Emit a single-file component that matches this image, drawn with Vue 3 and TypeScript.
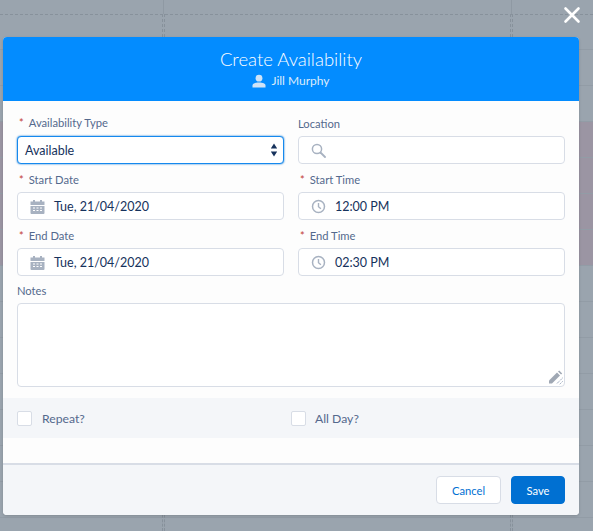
<script setup lang="ts">
const gridRows = [49, 85, 121, 157, 193, 229, 265, 301, 337, 373, 409, 445, 481, 517]
const columns = [163, 511]
</script>

<template>
  <div class="page">
    <div class="backdrop">
      <div class="block"></div>
      <div v-for="y in gridRows" :key="y" class="hline" :style="{ top: y + 'px' }"></div>
      <div class="dash"></div>
      <template v-for="x in columns" :key="x">
        <div class="vline" :style="{ left: x + 'px' }"></div>
        <div class="vdash" :style="{ left: x - 1 + 'px' }"></div>
        <div class="vdash low" :style="{ left: x - 1 + 'px' }"></div>
      </template>
    </div>
    <button class="close" aria-label="Close">
      <svg width="18" height="18" viewBox="0 0 18 18"><path d="M2.500 2.500 15.500 15.500M15.500 2.500 2.500 15.500" stroke="#fff" stroke-width="2.600" stroke-linecap="round" /></svg>
    </button>
    <section class="modal">
      <header class="head">
        <h1>Create Availability</h1>
        <div class="who">
          <svg width="14" height="14" viewBox="0 0 14 14"><circle cx="7" cy="4.200" r="3.400" fill="#cfe3f7" /><path d="M0.500 13.400V11.600C0.500 9.800 3 8.600 7 8.600s6.500 1.200 6.500 3v1.800z" fill="#cfe3f7" /></svg>
          <span>Jill Murphy</span>
        </div>
      </header>
      <div class="body">
        <div class="grid">
          <div class="field">
            <label><i>*</i>Availability Type</label>
            <div class="input select">
              <span>Available</span>
              <svg width="8" height="16" viewBox="0 0 8 16"><path d="M4 1.500 7.200 6.500H.8zM4 14.500 .8 9.500h6.400z" fill="#16325c" /></svg>
            </div>
          </div>
          <div class="field">
            <label class="plain">Location</label>
            <div class="input">
              <svg class="ico" width="15" height="15" viewBox="0 0 15 15"><circle cx="6" cy="6" r="4.600" fill="none" stroke="#a8b2c1" stroke-width="1.500" /><path d="M9.500 9.500 14 14" stroke="#a8b2c1" stroke-width="1.800" stroke-linecap="round" /></svg>
            </div>
          </div>
          <div class="field">
            <label><i>*</i>Start Date</label>
            <div class="input">
              <svg class="ico" width="15" height="15" viewBox="0 0 15 15"><path d="M3 1h2v1.500h5V1h2v1.500h2.500V6H.5V2.500H3zM.5 7h14v7a1 1 0 0 1-1 1h-12a1 1 0 0 1-1-1z" fill="#a8b2c1" /><path d="M3 9h2M6.500 9h2M10 9h2M3 11.500h2M6.500 11.500h2M10 11.500h2" stroke="#fff" stroke-width="1" /></svg>
              <span>Tue, 21/04/2020</span>
            </div>
          </div>
          <div class="field">
            <label><i>*</i>Start Time</label>
            <div class="input">
              <svg class="ico" width="15" height="15" viewBox="0 0 15 15"><circle cx="7.500" cy="7.500" r="6" fill="none" stroke="#a8b2c1" stroke-width="1.500" /><path d="M7.500 4v3.700l2.400 2" fill="none" stroke="#a8b2c1" stroke-width="1.400" /></svg>
              <span>12:00 PM</span>
            </div>
          </div>
          <div class="field">
            <label><i>*</i>End Date</label>
            <div class="input">
              <svg class="ico" width="15" height="15" viewBox="0 0 15 15"><path d="M3 1h2v1.500h5V1h2v1.500h2.500V6H.5V2.500H3zM.5 7h14v7a1 1 0 0 1-1 1h-12a1 1 0 0 1-1-1z" fill="#a8b2c1" /><path d="M3 9h2M6.500 9h2M10 9h2M3 11.500h2M6.500 11.500h2M10 11.500h2" stroke="#fff" stroke-width="1" /></svg>
              <span>Tue, 21/04/2020</span>
            </div>
          </div>
          <div class="field">
            <label><i>*</i>End Time</label>
            <div class="input">
              <svg class="ico" width="15" height="15" viewBox="0 0 15 15"><circle cx="7.500" cy="7.500" r="6" fill="none" stroke="#a8b2c1" stroke-width="1.500" /><path d="M7.500 4v3.700l2.400 2" fill="none" stroke="#a8b2c1" stroke-width="1.400" /></svg>
              <span>02:30 PM</span>
            </div>
          </div>
        </div>
        <div class="notes">
          <label class="notes-label">Notes</label>
          <div class="area">
            <svg class="grip" width="15" height="15" viewBox="0 0 15 15"><path d="M1 10.500 9 2.500l3 3-8 8H1z" fill="#a0a8b4" /><path d="M10 1.500 11.200.5l3 3-1.200 1z" fill="#a0a8b4" /><path d="M14.500 8 8.500 14M14.500 11.500l-3 3" stroke="#54698d" stroke-width=".8" stroke-dasharray="1 1" /></svg>
          </div>
        </div>
        <div class="checks">
          <div class="check first"><span class="box"></span><span>Repeat?</span></div>
          <div class="check second"><span class="box"></span><span>All Day?</span></div>
        </div>
      </div>
      <footer class="foot">
        <button class="btn cancel">Cancel</button>
        <button class="btn save">Save</button>
      </footer>
    </section>
  </div>
</template>

<style scoped>
.page {
  position: relative;
  width: 593px;
  height: 531px;
  overflow: hidden;
  background: #9aa4ae;
  font-family: Lato, "Open Sans", sans-serif;
  color: #16325c;
}
.backdrop { position: absolute; inset: 0; }
.hline { position: absolute; left: 0; right: 0; height: 1px; background: #929ca6; }
.vline { position: absolute; top: 0; width: 1px; height: 14px; background: #8f99a3; }
.vdash {
  position: absolute;
  top: 14px;
  width: 1px;
  height: 23px;
  border-left: 1px dashed #87919b;
  border-right: 1px dashed #87919b;
}
.vdash.low { top: 515px; height: 16px; }
.dash { position: absolute; left: 0; right: 0; top: 14px; border-top: 1px dashed #87919b; }
.block { position: absolute; left: 0; right: 0; top: 121px; height: 145px; background: #9b95a3; }
.close {
  position: absolute;
  left: 563px;
  top: 6px;
  width: 18px;
  height: 18px;
  padding: 0;
  border: 0;
  background: none;
  display: flex;
}
.modal {
  position: absolute;
  left: 3px;
  top: 37px;
  width: 576px;
  height: 478px;
  border-radius: 4px;
  overflow: hidden;
  background: #fdfdfd;
  display: flex;
  flex-direction: column;
  box-shadow: 0 1px 3px rgba(0, 0, 0, .16);
}
.head {
  height: 64px;
  background: #038cff;
  color: #fff;
  text-align: center;
  flex: none;
  padding-top: 9px;
  box-sizing: border-box;
}
.head h1 { margin: 0; font-size: 18.500px; line-height: 26px; font-weight: 300; }
.who {
  display: flex;
  justify-content: center;
  align-items: center;
  gap: 5px;
  font-size: 12px;
  line-height: 18px;
  margin-top: 0;
  color: #dcebfa;
}
.body { flex: 1; display: flex; flex-direction: column; padding-top: 14px; }
.grid {
  display: grid;
  grid-template-columns: 267px 267px;
  column-gap: 14px;
  row-gap: 8px;
  padding: 0 14px;
}
.field label {
  display: block;
  height: 20px;
  line-height: 15px;
  font-size: 11.200px;
  color: #54698d;
}
.field:nth-child(-n+2) label { height: 21px; }
.field label.plain { padding-top: 1px; height: 20px; }
.field label i { color: #c23934; font-style: normal; margin: 0 5px 0 2px; }
.input {
  box-sizing: border-box;
  height: 28px;
  border: 1px solid #d8dde6;
  border-radius: 4px;
  background: #fff;
  display: flex;
  align-items: center;
  padding-left: 12px;
  font-size: 12.500px;
}
.input .ico { margin-right: 9px; flex: none; }
.select {
  justify-content: space-between;
  padding: 0 5px 0 7px;
  border-color: #1589ee;
  box-shadow: 0 0 2px #0070d2;
}
.notes { padding: 0 14px; margin-top: 8px; }
.notes-label { display: block; height: 19px; line-height: 13px; font-size: 11.200px; color: #54698d; }
.area {
  position: relative;
  box-sizing: border-box;
  height: 84px;
  border: 1px solid #d8dde6;
  border-radius: 4px;
  background: #fff;
}
.grip { position: absolute; right: 1px; bottom: 1px; }
.checks {
  display: flex;
  align-items: center;
  height: 40px;
  margin-top: 11px;
  background: #f4f6f9;
  padding-left: 14px;
  font-size: 12.200px;
  color: #54698d;
}
.check { display: flex; align-items: center; gap: 10px; }
.check.first { width: 274px; }
.check.second { gap: 9px; }
.box {
  width: 15px;
  height: 15px;
  box-sizing: border-box;
  border: 1px solid #d8dde6;
  border-radius: 2px;
  background: #fff;
}
.foot {
  box-sizing: border-box;
  flex: none;
  height: 52px;
  background: #f4f6f9;
  border-top: 2px solid #d8dde6;
  display: flex;
  justify-content: flex-end;
  align-items: center;
  gap: 10px;
  padding: 0 14px;
}
.btn {
  box-sizing: border-box;
  height: 28px;
  border-radius: 4px;
  font-family: inherit;
  font-size: 11.200px;
  padding: 0;
}
.cancel { width: 65px; background: #fff; border: 1px solid #d8dde6; color: #0070d2; }
.save { width: 54px; background: #0070d2; border: 1px solid #0070d2; color: #fff; }
</style>
